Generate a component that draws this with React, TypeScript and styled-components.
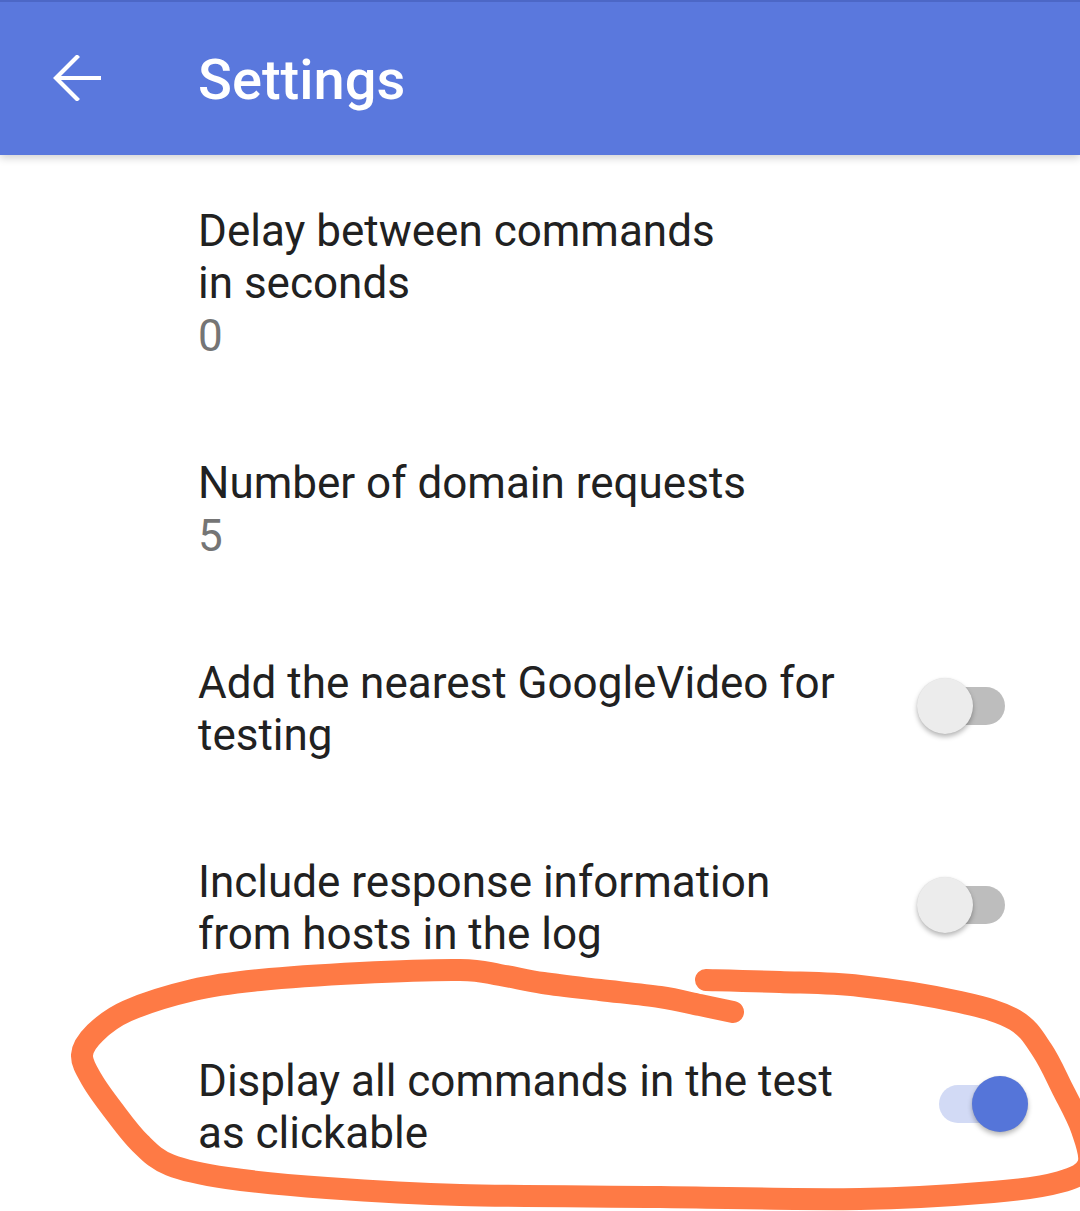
import React from "react";
import styled, { createGlobalStyle } from "styled-components";

const GlobalStyle = createGlobalStyle`
  html, body { margin: 0; padding: 0; background: #ffffff; }
  body { font-family: Roboto, "Noto Sans", Arial, sans-serif; }
  * { box-sizing: border-box; }
`;

const Screen = styled.div`
  position: relative;
  width: 1080px;
  height: 1211px;
  overflow: hidden;
  background: #ffffff;
`;

const AppBar = styled.header`
  position: relative;
  z-index: 1;
  display: flex;
  align-items: center;
  height: 155px;
  background: #5a78dd;
  border-top: 2px solid #4c67c6;
  box-shadow: 0 3px 8px rgba(0, 0, 0, 0.18);
`;

const BackButton = styled.div`
  display: flex;
  align-items: center;
  justify-content: center;
  width: 198px;
  height: 100%;
  padding-right: 44px;
  padding-bottom: 2px;
`;

const Title = styled.h1`
  margin: 0;
  padding-top: 2px;
  font-family: Roboto, "Noto Sans", Arial, sans-serif;
  font-weight: 500;
  font-size: 56px;
  color: #ffffff;
  letter-spacing: 0px;
`;

const List = styled.div`
  display: flex;
  flex-direction: column;
`;

const Item = styled.div`
  display: flex;
  align-items: center;
  padding: 50px 0 45px 198px;
`;

const TextBlock = styled.div`
  flex: 1;
  display: flex;
  flex-direction: column;
`;

const ItemTitle = styled.div`
  font-family: Roboto, "Noto Sans", Arial, sans-serif;
  font-size: 44px;
  line-height: 52px;
  color: #212121;
  white-space: nowrap;
`;

const Summary = styled.div`
  margin-top: 2px;
  font-family: Roboto, "Noto Sans", Arial, sans-serif;
  font-size: 44px;
  line-height: 51px;
  color: #757575;
`;

const SwitchWrap = styled.div`
  position: relative;
  flex: none;
  width: 66px;
  height: 38px;
  margin-right: 75px;
  margin-bottom: 7px;
`;

const Track = styled.div<{ $on: boolean }>`
  width: 100%;
  height: 100%;
  border-radius: 19px;
  background: ${(p) => (p.$on ? "#d2daf5" : "#bdbdbd")};
`;

const Thumb = styled.div<{ $on: boolean }>`
  position: absolute;
  top: -9px;
  left: ${(p) => (p.$on ? "33px" : "-22px")};
  width: 56px;
  height: 56px;
  border-radius: 50%;
  background: ${(p) => (p.$on ? "#5575d9" : "#ececec")};
  box-shadow: 0 3px 5px rgba(0, 0, 0, 0.28), 0 0 1px rgba(0, 0, 0, 0.12);
`;

const Overlay = styled.svg`
  position: absolute;
  left: 0;
  top: 0;
  width: 1080px;
  height: 1211px;
  pointer-events: none;
  z-index: 2;
`;

const Switch: React.FC<{ on: boolean }> = ({ on }) => (
  <SwitchWrap>
    <Track $on={on} />
    <Thumb $on={on} />
  </SwitchWrap>
);

const BackArrow = () => (
  <svg width="48" height="46" viewBox="0 0 48 46" fill="none">
    <path
      d="M46 23 H4 M24 2 L3 23 L24 44"
      stroke="#ffffff"
      strokeWidth="4.2"
      strokeLinecap="square"
      strokeLinejoin="miter"
    />
  </svg>
);

type Pt = [number, number];

const toSmoothPath = (pts: Pt[]): string => {
  let d = `M${pts[0][0]},${pts[0][1]}`;
  for (let i = 0; i < pts.length - 1; i++) {
    const p0 = pts[i - 1] || pts[i];
    const p1 = pts[i];
    const p2 = pts[i + 1];
    const p3 = pts[i + 2] || p2;
    const c1x = p1[0] + (p2[0] - p0[0]) / 6;
    const c1y = p1[1] + (p2[1] - p0[1]) / 6;
    const c2x = p2[0] - (p3[0] - p1[0]) / 6;
    const c2y = p2[1] - (p3[1] - p1[1]) / 6;
    d += ` C${c1x.toFixed(1)},${c1y.toFixed(1)} ${c2x.toFixed(1)},${c2y.toFixed(1)} ${p2[0]},${p2[1]}`;
  }
  return d;
};

const scribble: Pt[] = [
  [733, 1012], [700, 1005], [660, 997], [600, 990], [543, 983], [500, 975],
  [460, 970], [360, 973], [260, 980], [193, 990], [127, 1011], [95, 1033],
  [82, 1055], [92, 1080], [113, 1110], [140, 1143], [170, 1165], [227, 1178],
  [327, 1188], [460, 1195], [660, 1197], [860, 1199], [993, 1192], [1060, 1182],
  [1088, 1165], [1082, 1130], [1063, 1090], [1042, 1050], [1015, 1020],
  [960, 1002], [860, 986], [780, 982], [706, 980],
];

const items = [
  { title: ["Delay between commands", "in seconds"], summary: "0" },
  { title: ["Number of domain requests"], summary: "5" },
  { title: ["Add the nearest GoogleVideo for", "testing"], toggle: false },
  { title: ["Include response information", "from hosts in the log"], toggle: false },
  { title: ["Display all commands in the test", "as clickable"], toggle: true },
];

export default function App() {
  return (
    <>
      <GlobalStyle />
      <Screen>
        <AppBar>
          <BackButton>
            <BackArrow />
          </BackButton>
          <Title>Settings</Title>
        </AppBar>
        <List>
          {items.map((it, i) => (
            <Item key={i}>
              <TextBlock>
                {it.title.map((line, j) => (
                  <ItemTitle key={j}>{line}</ItemTitle>
                ))}
                {it.summary !== undefined && <Summary>{it.summary}</Summary>}
              </TextBlock>
              {it.toggle !== undefined && <Switch on={it.toggle} />}
            </Item>
          ))}
        </List>
        <Overlay viewBox="0 0 1080 1211">
          <path
            d={toSmoothPath(scribble)}
            fill="none"
            stroke="#fe7a45"
            strokeWidth="22"
            strokeLinecap="round"
            strokeLinejoin="round"
          />
        </Overlay>
      </Screen>
    </>
  );
}
